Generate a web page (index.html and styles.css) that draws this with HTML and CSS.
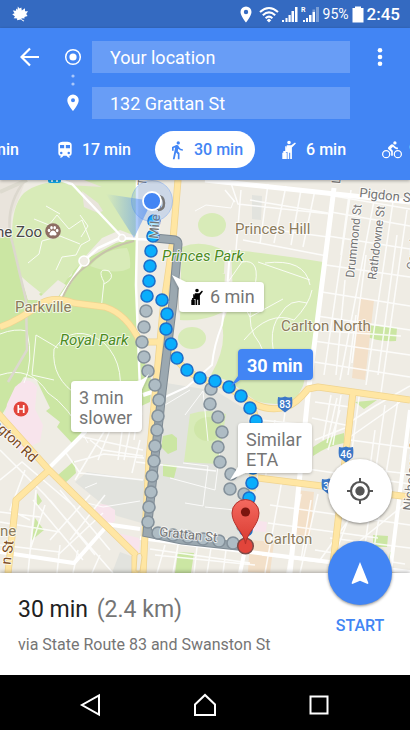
FILE: index.html
```html
<!DOCTYPE html>
<html lang="en">
<head>
<meta charset="utf-8">
<meta name="viewport" content="width=device-width, initial-scale=1">
<title>Directions</title>
<link rel="stylesheet" href="styles.css">
</head>
<body>
<div class="status">
  <svg class="leaf" viewBox="0 0 16 16" width="16" height="16"><path fill="#fff" d="M5.800.6 7.500 2.600 9.300 1.500 9.800 4.600 13 2.200 13 5.200 16 5.300 14.200 8 15.600 10 12.400 11 12.600 12.600 9.500 12.300 9.600 13.200 12.300 14.800 11.500 15.500 8.800 13.400 5 14.300 5.200 12.600 1.600 12.200 3 10.400.2 8.200 2.600 7.300.8 4.400 4 4.800 4.200 2.600 5.600 3.800z"/></svg>
  <div class="status-right">
    <svg viewBox="0 0 12 17" width="12" height="17"><path fill="#fff" fill-rule="evenodd" d="M6 .5A5.500 5.500 0 0 0 .5 6C.5 10 6 16.500 6 16.500S11.500 10 11.500 6A5.500 5.500 0 0 0 6 .5zm0 3.300a2.200 2.200 0 1 1 0 4.400 2.200 2.200 0 0 1 0-4.400z"/></svg>
    <svg class="wifi" viewBox="0 0 20 17" width="20" height="17"><g fill="none" stroke="#fff" stroke-width="2.100"><path d="M1 6Q10-2 19 6"/><path d="M3.800 9.200Q10 3.700 16.200 9.200"/><path d="M6.600 12.200Q10 9.200 13.400 12.200"/></g><path fill="#fff" d="M10 12.500l2.300 1.800L10 16.500l-2.300-2.200z"/></svg>
    <svg viewBox="0 0 16 17" width="16" height="17"><path fill="#fff" d="M0 14h2v2H0zM3.500 12h2v4h-2zM6.500 9h2.200v7H6.500zM9.500 5h2.500v11H9.500zM13 1h2.500v15H13z"/></svg>
    <svg class="roam" viewBox="0 0 19 19" width="19" height="19"><text class="roam-r" x="0" y="7">R</text><path fill="#fff" d="M2 15h2v2H2zM5 13h2v4H5zM8 10h2.500v7H8zM11.500 7H14v10h-2.500z"/><path fill="#fff" opacity=".35" d="M15 2h3v15h-3zM11.500 4.500H14V7h-2.500z"/></svg>
    <span class="battery-text">95%</span>
    <svg viewBox="0 0 12 17" width="12" height="17"><path fill="#fff" d="M3 .5h6V2h2.500v14.500H.5V2H3z"/></svg>
    <span class="clock">2:45</span>
  </div>
</div>

<header class="header">
  <div class="route-form">
    <button class="icon-button" aria-label="Back"><svg viewBox="0 0 20 20" width="20" height="20"><path d="M19 10H2M10 1.500 1.500 10l8.500 8.500" fill="none" stroke="#fff" stroke-width="2.200"/></svg></button>
    <svg class="stops" viewBox="0 0 18 78" width="18" height="78"><circle cx="9" cy="16" r="7.300" fill="none" stroke="#fff" stroke-width="1.500"/><circle cx="9" cy="16" r="3.600" fill="#fff"/><g fill="#a9c7fb"><circle cx="9" cy="35" r="1.600"/><circle cx="9" cy="43" r="1.600"/></g><path fill="#fff" fill-rule="evenodd" d="M9 53.500A5.700 5.700 0 0 0 3.300 59.200C3.300 63.500 9 70 9 70s5.700-6.500 5.700-10.800A5.700 5.700 0 0 0 9 53.500zm0 3.700a2 2 0 1 1 0 4 2 2 0 0 1 0-4z"/></svg>
    <div class="fields">
      <input type="text" aria-label="Start" value="Your location">
      <input type="text" aria-label="Destination" value="132 Grattan St">
    </div>
    <button class="icon-button" aria-label="More options"><svg viewBox="0 0 20 20" width="20" height="20"><g fill="#fff"><circle cx="10" cy="3.200" r="2.300"/><circle cx="10" cy="10" r="2.300"/><circle cx="10" cy="16.800" r="2.300"/></g></svg></button>
  </div>
  <nav class="modes" aria-label="Travel mode">
    <button class="mode">min</button>
    <button class="mode"><svg viewBox="0 0 24 24" width="20" height="20"><path fill="currentColor" d="M12 2c-4 0-8 .5-8 4v9.500A3.500 3.500 0 0 0 7.500 19L6 20.500v.5h2.200l2-2h3.600l2 2H18v-.5L16.500 19a3.500 3.500 0 0 0 3.500-3.500V6c0-3.500-3.600-4-8-4zM7.500 17a1.500 1.500 0 1 1 0-3 1.500 1.500 0 0 1 0 3zm3.500-7H6V6h5zm2 0V6h5v4zm3.500 7a1.500 1.500 0 1 1 0-3 1.500 1.500 0 0 1 0 3z"/></svg>17 min</button>
    <button class="mode mode-on"><svg viewBox="0 0 24 24" width="20" height="20"><path fill="currentColor" d="M13.500 5.500a2 2 0 1 0 0-4 2 2 0 0 0 0 4zM9.800 8.900 7 23h2.100l1.800-8 2.100 2v6h2v-7.500l-2.100-2 .6-3A7.300 7.300 0 0 0 19 13v-2c-1.900 0-3.500-1-4.300-2.400l-1-1.600c-.4-.6-1-1-1.700-1-.3 0-.5.1-.8.1L6 8.300V13h2V9.600z"/></svg>30 min</button>
    <button class="mode"><svg viewBox="0 0 20 20" width="20" height="20"><path fill="currentColor" d="M10 4.300a1.800 1.800 0 1 0 0-3.600 1.800 1.800 0 0 0 0 3.600zM7.800 5.200h4.400l3.800-2.700.9 1.100-4 3.900V19h-1.700v-6.300h-1V19H8.500v-7H7zM6.200 6.200h1.200v6H6.200zM3.300 12.700h1V11h2.500v1.700h1V19H3.300z"/></svg>6 min</button>
    <button class="mode"><svg viewBox="0 0 24 24" width="20" height="20"><path fill="currentColor" d="M15.500 5.500a2 2 0 1 0 0-4 2 2 0 0 0 0 4zM5 12a5 5 0 1 0 0 10 5 5 0 0 0 0-10zm0 8.500a3.500 3.500 0 1 1 0-7 3.500 3.500 0 0 1 0 7zm5.800-10 2.400-2.400.8.800c1.300 1.300 3 2.100 5.100 2.100V9c-1.500 0-2.700-.6-3.600-1.500l-1.900-1.900c-.5-.4-1-.6-1.600-.6s-1.100.2-1.400.6L7.800 8.400c-.4.4-.6.900-.6 1.400 0 .6.200 1.100.6 1.400L11 14v5h2v-6.200zM19 12a5 5 0 1 0 0 10 5 5 0 0 0 0-10zm0 8.500a3.500 3.500 0 1 1 0-7 3.500 3.500 0 0 1 0 7z"/></svg>9</button>
  </nav>
</header>

<main class="map">
<svg class="map-art" viewBox="0 180 410 393" preserveAspectRatio="xMidYMid slice" role="img" aria-label="Map of Carlton">
  <defs>
    <linearGradient id="beam" x1="1" x2="0"><stop offset="0" stop-color="#4285f4" stop-opacity=".65"/><stop offset="1" stop-color="#4285f4" stop-opacity="0"/></linearGradient>
    <linearGradient id="pin" x2="0" y2="1"><stop offset="0" stop-color="#f4695f"/><stop offset="1" stop-color="#d93a30"/></linearGradient>
    <filter id="shadow" x="-20%" y="-20%" width="140%" height="150%"><feDropShadow dx="0" dy="1" stdDeviation="1.500" flood-opacity=".25"/></filter>
    <path id="shield" d="M-7-7Q-3.500-6 0-7.500 3.500-6 7-7 8 0 6.500 3.500L0 8.500-6.500 3.500Q-8 0-7-7z" fill="#3c78c8"/>
  </defs>
  <rect y="180" width="410" height="393" fill="#efece4"/>

  <!-- parks -->
  <path fill="#cbe6a3" d="M0 233l12-3L28 300l108-60v50l4 60 12 32-2 20-55 25-23 16-15-16 3-5-14-11 4-3-14-29-12-2L0 418z"/>
  <path fill="#cbe6a3" d="M70 180h67v75L60 310l20-60z"/>
  <path fill="#d8ebb8" d="M24 193Q40 180 70 182L138 180v58l-18 0Q82 254 62 287L46 297 20 276 12 235Q12 205 24 193z"/>
  <path fill="#d8ebb8" d="M90 266q15-18 37-18 4 8 3 20-14 8-40-2z"/>
  <path fill="#efece4" d="M20 275l21 21 17-16 8 5-10 15H28z"/>
  <path fill="#e9e4dc" d="M82 191l16 12 5 8-5 2-14-6zM66 180h18l18 7-34-2z"/>
  <path fill="#efece4" d="M102 238l18-8 18 7-22 6-26 14-8 3z"/>
  <path fill="#e9e4dc" d="M0 180h26L12 215l-2 20-10 3z"/>
  <path fill="#f8e4ec" d="M15 387q13-13 22 0l-2 22 8 16-3 17-20 9-17-22 4-25z"/>
  <path fill="#e2e3de" d="M75 482l12-10 58 8v44l-28-8-32-26zM166 383l50 8 32 20 4 90-9 39-92-12zM120 552l22 8v13h-30z"/>
  <path fill="#cbe6a3" d="M58 475l16-14 2 12-11 10zM37 493l5 8-5 6zM35 518l9 12-12 10zM355 402l22-2-13 9zM373 535l15 1-1 11h-14zM178 552l16 1-3 20h-16zM390 552l4 1-3 20h-4z"/>
  <path fill="#f8e4ec" d="M95 510q3-8 12-5l8 5v11l-10 7zM113 532l26 6v17l-20-14zM253 520l14 2-1 10-14-1zM130 538l10 1-1 12z"/>
  <g fill="#d8ebb8">
    <path d="M231 250q30 2 92 12l-10 82-10 42-8 15q-20 6-39 0l-27-20-18-6q16-28 11-50l11-30z"/>
    <ellipse cx="212" cy="225" rx="14" ry="12"/>
    <path d="M182 247q20-8 43 4l-1 22-43-3zM181 270q20-5 44 4l-2 38q-20 10-43 8z"/>
    <ellipse cx="192" cy="338" rx="14" ry="11"/>
    <path d="M190 414q18-6 36 0l-8 50-34-2z"/>
  </g>
  <path fill="#cbe6a3" d="M366 325l31 3-1 13q-20 1-30-5zM163 436l9-2 5 4v12l-9 4-7-7zM163 464l14 2-3 12-11-2zM313 447q14-10 31-14v10q-17 3-31 13z"/>
  <ellipse cx="208" cy="429" rx="14" ry="12" fill="#cfe6a8"/>
  <path fill="#f3e0c9" d="M360 298l14 2-9 80-13-2zM297 490l17 2-4 45-16-3zM250 540l24 2-4 31-22-1z"/>
  <path fill="#e2e3de" d="M252 195l10 1-1 24-9-1z"/>

  <!-- footpaths -->
  <g fill="none" stroke="#fff" stroke-width="1" opacity=".85">
    <path d="M0 334q15-6 27-3 7 30-3 52M36 335l-4 40 22 5M36 335l22 13M54 349q20-28 50-6 25 24 12 70M54 349q-3 30 25 47M0 375q30-10 48 18 20 12 40 50"/>
    <path d="M34 219l15 6 8-10 12 14 13-9 8 20-9 5-5 10-14 2-6 13M28 263l11-9 3-13 18-5 20 8M46 206l14 8M80 215l8 11-7 11M101 310l3-28q-8-15 5-11 7 7-5 13"/>
    <path d="M195 211l11-6 25 3 3-8M165 405l25-15M185 415l18-24 5 50M183 463l25 3-5 40-18-3M170 478l45 12 5-40M205 507l30 3M83 502l20 5 37-6M85 488l12-5"/>
    <path d="M228 282l14-20q20-4 12 28-8 30 0 45 12 15 15 40M228 305q14-8 22 12l33-18M244 340q25-30 50-20 15-15 18-30M265 263q40-5 45 22M258 262l52 18M283 380q-20-45-3-65 10-18 27-12"/>
  </g>
  <path d="M230 250l-3 40-5 35q-8 20-10 40l-25 22-22 10" fill="none" stroke="#fff" stroke-width="2"/>

  <!-- minor streets -->
  <g fill="none" stroke="#fff" stroke-width="1.500" opacity=".85">
    <path d="M230 180l8 24 92 10M240 225l88 12M250 200l78 13M286 186l-12 57M301 190l-10 55M315 190l-12 57M268 184l-8 60M241 190l-5 60M225 190l10 12M243 240l84 16"/>
    <path d="M328 236l82 13M331 212l79 14M334 196l76 13M322 292l88 14M317 316l93 14M314 341l96 14M308 361l102 16M326 265l84 12M311 330l90 6M307 386l103 15"/>
    <path d="M351 190l-27 185M376 190l-36 190M394 195l-28 190M407 210l-27 190M345 280l-9 95M366 255l-14 108M397 235l-19 140M356 315l-8 60M349 195l-8 60"/>
    <path d="M331 395l-8 45M337 398l-10 45M340 410l-12 40M360 390l-8 60M385 405l-24 168M398 400l-28 173M375 430l-12 90M341 395l-8 50"/>
    <path d="M315 402l35 5M312 418l38 8M350 440l60 8M340 466l70 8M260 462l150 22M315 440l30-12M287 480l50 5M260 420l50 5M270 505l140 20M268 523l110 15M262 555l148 18M330 538l80 10M315 550l90 14M347 424l28-18 35-20M336 560l74-60M320 560l30-42M350 437l50-35"/>
    <path d="M282 480l-17 93M301 494l-14 79M318 494l-18 79M311 500l-10 60M275 420l-10 60M285 412l-8 60M348 520l-20 53"/>
    <path d="M0 450l45 45 68 78M0 480l22-18 53 45M0 512l40 5M0 522l60 10M0 545l60 7M25 470l-15 40 20 10M36 490l-8 83M45 505l-15 45M50 500l45 55M60 490l50 60M70 540l35-45M50 540l40-45M58 555l45-42M33 500l50 60M74 462l30 -8 40 4M90 440l13 10 40 6M66 453l14 20 63 7M105 430l-30 50M110 430l-12 30M123 425l-5 35M83 437l60 13"/>
    <path d="M150 549l100 14M165 545l-8 28M178 545l-5 28M197 547l-3 26M211 548l-4 25M226 550l-3 23M155 555l100 10M60 545l-3 28M78 550l-5 23M100 555l-8 18"/>
    <path d="M136 462l80 9M140 440l-8 33M132 420l-8 40M140 395l-6 45"/>
  </g>

  <!-- main roads -->
  <g fill="none" stroke="#fff" stroke-width="4">
    <path d="M205 180l205 22M334 188l-26 207-18 178" stroke-width="5"/>
    <path d="M137 180v55l-1 50 5 130M120 238l35 2M60 180l12 4 50 53M60 298l24-37 14-13 24-11" stroke-width="2.500"/>
    <path d="M50 467l36-36M0 552l74 11 31-35M105 524l35 5M140 538l110 14 160 20M247 540l-7 33M410 410l-20 163M143 395l18-6" />
  </g>
  <g fill="none" stroke="#dcd8ce" stroke-width="2.500"><path d="M25 180Q2 210 13 245L26 300l1 50-19 32"/><path stroke="#c7c2ab" stroke-width="2" d="M134 241q-30 7-46 24-16 10-26 34"/></g>
  <g fill="#efece4" stroke="#fff" stroke-width="1.600"><circle cx="84" cy="261" r="5"/><circle cx="122" cy="238" r="3.500"/></g>
  <path d="M0 192l27-12" stroke="#dddacf" stroke-width="4" fill="none"/>

  <g id="arterials" fill="none" stroke-linejoin="round">
    <path stroke="#f0d490" stroke-width="7" d="M0 327q18-6 42-24 12-7 32 0l31 4q22 7 35 35l20 0M178 180l-5 60-10 70-14 150-6 113M163 300l5 45q12 26 35 34l25 8 18 12q8 8 10 22l-4 70M246 399q20 14 40 8 10-3 22-18l10-2 92 13M-4 411l53 59 86 84v20M48 471L16 500 8 573M353 392l-21 181M258 478l152 19"/>
    <path stroke="#ffe6a3" stroke-width="5.500" d="M0 327q18-6 42-24 12-7 32 0l31 4q22 7 35 35l20 0M178 180l-5 60-10 70-14 150-6 113M163 300l5 45q12 26 35 34l25 8 18 12q8 8 10 22l-4 70M246 399q20 14 40 8 10-3 22-18l10-2 92 13M-4 411l53 59 86 84v20M48 471L16 500 8 573M353 392l-21 181M258 478l152 19"/>
  </g>
  <path fill="#efece4" stroke="#f0d490" d="M137 555q4-4 5 2l-2 14h-4z"/>

  <circle cx="53" cy="231" r="7.800" fill="#8d6e63"/>
  <g fill="#fff"><ellipse cx="49" cy="230.500" rx="1.300" ry="1.700"/><ellipse cx="51.500" cy="227.800" rx="1.300" ry="1.700"/><ellipse cx="54.700" cy="227.800" rx="1.300" ry="1.700"/><ellipse cx="57.200" cy="230.500" rx="1.300" ry="1.700"/><path d="M53 230.500q2 0 3.500 3 .5 2.300-1.800 2-1.700-.6-3.400 0-2.200.3-1.800-2 1.500-3 3.500-3z"/></g>
  <circle cx="21" cy="409" r="7.500" fill="#e2453b"/><path d="M18.300 405v8M23.700 405v8M18.300 409h5.400" stroke="#fff" stroke-width="1.700"/>
  <rect x="48" y="177" width="13" height="6" rx="2" fill="#12a5e8"/><path d="M51 181h2M56 181h2" stroke="#fff" stroke-width="1.500"/>
  <g class="shield"><use href="#shield" x="285" y="404"/><text x="285" y="408">83</text><use href="#shield" x="346" y="454"/><text x="346" y="458">46</text><use href="#shield" x="329" y="486"/><text x="326" y="490">3</text></g>

  <!-- alternative routes -->
  <path d="M155 238l20 2q3 1 3 4l-5 58-11 90-14 130-1 11 35 7 65 7" fill="none" stroke="#7e8a93" stroke-width="9"/>
  <path d="M155 238l20 2q3 1 3 4l-5 58-11 90-14 130-1 11 35 7 65 7" fill="none" stroke="#9ba8b0" stroke-width="7"/>
  <g fill="#aebcc4" stroke="#84919b" stroke-width="1.600">
    <circle cx="146" cy="311" r="6"/><circle cx="144" cy="327" r="6"/><circle cx="142" cy="342" r="6"/><circle cx="144" cy="357" r="6"/><circle cx="148" cy="371" r="6"/><circle cx="155" cy="385" r="6"/><circle cx="159" cy="400" r="6"/><circle cx="158" cy="416" r="6"/><circle cx="157" cy="430" r="6"/><circle cx="155" cy="446" r="6"/><circle cx="154" cy="461" r="6"/><circle cx="152" cy="476" r="6"/><circle cx="151" cy="492" r="6"/><circle cx="149" cy="507" r="6"/><circle cx="148" cy="522" r="6"/>
    <circle cx="158" cy="533" r="6"/><circle cx="173" cy="535" r="6"/><circle cx="188" cy="537" r="6"/><circle cx="203" cy="539" r="6"/><circle cx="219" cy="541" r="6"/><circle cx="233" cy="543" r="6"/>
    <circle cx="211" cy="389" r="6"/><circle cx="210" cy="404" r="6"/><circle cx="218" cy="417" r="6"/><circle cx="222" cy="432" r="6"/><circle cx="218" cy="447" r="6"/><circle cx="220" cy="462" r="6"/><circle cx="231" cy="474" r="6"/><circle cx="230" cy="489" r="6"/><circle cx="244" cy="494" r="6"/><circle cx="243" cy="526" r="6"/>
  </g>

  <!-- chosen route -->
  <g fill="#0aaefc" stroke="#1d6fc9" stroke-width="1.600">
    <circle cx="154" cy="221" r="6"/><circle cx="153" cy="236" r="6"/><circle cx="151" cy="251" r="6"/><circle cx="150" cy="266" r="6"/><circle cx="149" cy="281" r="6"/><circle cx="147" cy="296" r="6"/><circle cx="162" cy="300" r="6"/><circle cx="167" cy="314" r="6"/><circle cx="166" cy="329" r="6"/><circle cx="171" cy="344" r="6"/><circle cx="177" cy="358" r="6"/><circle cx="187" cy="370" r="6"/><circle cx="200" cy="378" r="6"/><circle cx="215" cy="381" r="6"/><circle cx="229" cy="387" r="6"/><circle cx="241" cy="396" r="6"/><circle cx="250" cy="408" r="6"/><circle cx="256" cy="421" r="6"/><circle cx="257" cy="436" r="6"/><circle cx="253" cy="468" r="6"/><circle cx="252" cy="483" r="6"/><circle cx="249" cy="498" r="6"/><circle cx="246" cy="530" r="6"/>
  </g>

  <!-- place labels -->
  <g class="label area">
    <text x="235" y="234">Princes Hill</text><text x="15" y="312">Parkville</text><text x="281" y="331">Carlton North</text><text x="264" y="544">Carlton</text>
    <text x="0" y="536">ne</text>
  </g>
  <text class="label zoo" x="42" y="237">he Zoo</text>
  <g class="label park"><text x="162" y="261">Princes Park</text><text x="60" y="345">Royal Park</text></g>
  <g class="label street">
    <text class="wide" transform="translate(359 197) rotate(6)">Pigdon St</text>
    <text transform="translate(354 278) rotate(-84)">Drummond St</text>
    <text transform="translate(376 280) rotate(-83)">Rathdowne St</text>
    <text transform="translate(415 270) rotate(-84)">Canning St</text>
    <text class="wide" transform="translate(412 511) rotate(-84)">Nicholson St</text>
    <text transform="translate(340 184) rotate(-84)">L</text>
    <text transform="translate(146 186) rotate(-84)">T</text>
    <text class="wide" transform="translate(159 536) rotate(6)">Grattan St</text>
    <text class="wide" transform="translate(158 239) rotate(-85)">Mile L</text>
  </g>
  <g class="label road"><text transform="translate(32 463) rotate(43)">ngton Rd</text><text transform="translate(12 553) rotate(-83)">n St</text></g>

  <path d="M152 201L106 194 134 238z" fill="url(#beam)"/>
  <circle cx="152" cy="201" r="20.500" fill="#4285f4" fill-opacity=".2" stroke="#4285f4" stroke-opacity=".3"/>
  <path d="M157 196q7 0 7 7t-6 7" fill="none" stroke="#777" stroke-width="2.500"/>
  <circle cx="152" cy="201" r="9" fill="#4285f4" stroke="#fff" stroke-width="1.800"/>
  <circle cx="245.500" cy="546" r="7.800" fill="#e2453b" stroke="#7d4a47" stroke-width="1.500"/>
  <path d="M245.500 544c-1-11-13.500-19-13.500-31a13.500 13.500 0 0 1 27 0c0 12-12.500 20-13.500 31z" fill="url(#pin)" stroke="#b5312b"/>
  <circle cx="245.500" cy="512" r="4.600" fill="#7c150f"/>

  <!-- callouts -->
  <g class="callout">
    <path filter="url(#shadow)" fill="#fff" d="M172 275l14 7h74q4 0 4 4v22q0 4-4 4h-77q-4 0-4-4v-20z"/>
    <path fill="#000" transform="translate(187 288)" d="M10 4.300a1.800 1.800 0 1 0 0-3.600 1.800 1.800 0 0 0 0 3.600zM7.800 5.200h4.400l2.800-2.700.9 1.100-3 3.900V17h-1.700v-5.300h-1V17H8.500v-6H7zM6.200 6.200h1.200v5H6.200zM4.300 11.700h.8V10h1.700v1.700h1V17H4.300z"/>
    <text x="210" y="303">6 min</text>
    <path filter="url(#shadow)" fill="#fff" d="M75 381h62q5 0 12-7l-7 15v38q0 5-5 5H75q-4 0-4-4v-43q0-4 4-4z"/>
    <text x="79" y="404">3 min</text><text x="79" y="424">slower</text>
    <path filter="url(#shadow)" fill="#fff" d="M242 423h66q4 0 4 4v42q0 4-4 4h-63l-15 7 8-13v-40q0-4 4-4z"/>
    <text x="246" y="446">Similar</text><text x="246" y="466">ETA</text>
    <path filter="url(#shadow)" fill="#4285f4" d="M242 349h67q4 0 4 4v23q0 4-4 4h-69l-10 7 8-11v-23q0-4 4-4z"/>
    <text class="chosen" x="247" y="372">30 min</text>
  </g>
</svg>
</main>

<section class="sheet">
  <div class="summary">
    <h1>30 min <span>(2.4 km)</span></h1>
    <p>via State Route 83 and Swanston St</p>
  </div>
  <div class="actions">
    <button class="fab fab-locate" aria-label="Show my location"><svg viewBox="0 0 26 26" width="26" height="26"><circle cx="13" cy="13" r="9" fill="none" stroke="#555" stroke-width="2.200"/><circle cx="13" cy="13" r="4.700" fill="#555"/><path d="M13 0v5M13 21v5M0 13h5M21 13h5" stroke="#555" stroke-width="2"/></svg></button>
    <button class="start"><span class="fab fab-start"><svg viewBox="0 0 20 24" width="20" height="24"><path fill="#fff" d="M10 1l8.500 21.300-.9.700L10 19.700 2.400 23l-.9-.7z"/></svg></span>START</button>
  </div>
</section>

<nav class="system" aria-label="System">
  <button aria-label="System back"><svg viewBox="0 0 24 24" width="24" height="24"><path d="M20 2.500v19L3 12z"/></svg></button>
  <button aria-label="Home"><svg viewBox="0 0 24 24" width="24" height="24"><path d="M2 11.500 12 2l10 9.500V22H2z"/></svg></button>
  <button aria-label="Recent apps"><svg viewBox="0 0 24 24" width="24" height="24"><path d="M3.500 3.500h17v17h-17z"/></svg></button>
</nav>
</body>
</html>
```
FILE: styles.css
```css
* { box-sizing: border-box; }
body {
  margin: 0;
  min-height: 100vh;
  display: flex;
  flex-direction: column;
  font-family: Roboto, "Liberation Sans", sans-serif;
  background: #fff;
  overflow-x: hidden;
}
button { border: 0; padding: 0; background: none; color: inherit; font: inherit; }
svg { display: block; flex: none; }

.status {
  height: 28px;
  flex: none;
  display: flex;
  align-items: center;
  justify-content: space-between;
  padding: 0 10px 0 12px;
  background: #346ac1;
  color: #fff;
}
.status-right { display: flex; align-items: center; gap: 3px; }
.wifi { margin-left: 4px; }
.roam-r { font-size: 7px; font-weight: 700; fill: #fff; }
.battery-text { font-size: 14px; }
.clock { font-size: 17px; font-weight: 500; }

.header {
  flex: none;
  background: #4285f4;
  color: #fff;
  padding: 13px 0 12px;
  position: relative;
  box-shadow: 0 1px 3px rgba(0, 0, 0, .3);
  z-index: 1;
}
.route-form { display: flex; align-items: flex-start; padding: 0 20px; }
.icon-button { height: 32px; display: grid; place-items: center; }
.stops { margin: 0 10px 0 24px; }
.fields { flex: 1; display: grid; gap: 14px; margin-right: 20px; min-width: 0; }
.fields input {
  width: 100%;
  height: 32px;
  border: 0;
  padding: 0 18px;
  background: #689df6;
  color: #fff;
  font: 18px Roboto, "Liberation Sans", sans-serif;
}
.modes { display: flex; gap: 12px; margin: 12px 0 0 -20px; overflow: hidden; }
.mode {
  flex: none;
  height: 37px;
  display: flex;
  align-items: center;
  gap: 7px;
  padding: 0 12px;
  border-radius: 19px;
  font-size: 16px;
  font-weight: 500;
}
.mode-on { background: #fff; color: #4285f4; }

.map { flex: 1; min-height: 240px; position: relative; overflow: hidden; }
.map-art { position: absolute; inset: 0; width: 100%; height: 100%; }
.label { paint-order: stroke; stroke: rgba(255, 255, 255, .7); stroke-width: 2px; stroke-linejoin: round; }
.area { font-size: 15px; fill: #8b7b5c; }
.zoo { font-size: 15px; fill: #484848; text-anchor: end; }
.park { font-size: 15px; font-style: italic; fill: #4b8b1f; }
.street { font-size: 12px; fill: #747474; }
.wide { font-size: 13px; }
.road { font-size: 14px; fill: #7a4a22; text-anchor: end; }
.road text + text { text-anchor: middle; }
.shield text { font-size: 10px; font-weight: 500; fill: #fff; text-anchor: middle; }
.callout text { font-size: 18px; fill: #757575; }
.callout .chosen { font-weight: 700; fill: #fff; }

.sheet {
  flex: none;
  min-height: 102px;
  position: relative;
  display: flex;
  background: #fff;
  padding: 23px 18px 17px;
  box-shadow: 0 -1px 4px rgba(0, 0, 0, .3);
  z-index: 1;
}
.summary { flex: 1; }
.summary h1 { margin: 0; font-size: 23px; line-height: 28px; font-weight: 400; color: #212121; }
.summary h1 span { color: #757575; margin-left: 3px; }
.summary p { margin: 11px 0 0; font-size: 16px; line-height: 20px; color: #757575; }
.actions {
  position: absolute;
  right: 18px;
  bottom: 38px;
  display: flex;
  flex-direction: column;
  align-items: center;
  gap: 18px;
}
.fab {
  width: 64px;
  height: 64px;
  border-radius: 50%;
  display: grid;
  place-items: center;
  box-shadow: 0 1px 3px rgba(0, 0, 0, .45);
}
.fab-locate { background: #fff; }
.fab-start { background: #4285f4; }
.start {
  display: flex;
  flex-direction: column;
  align-items: center;
  gap: 10px;
  font-size: 16px;
  line-height: 22px;
  font-weight: 500;
  color: #4285f4;
}

.system {
  flex: none;
  height: 55px;
  display: flex;
  align-items: center;
  justify-content: center;
  gap: 90px;
  padding-top: 4px;
  background: #000;
}
.system path { fill: none; stroke: #fff; stroke-width: 2px; }
```
